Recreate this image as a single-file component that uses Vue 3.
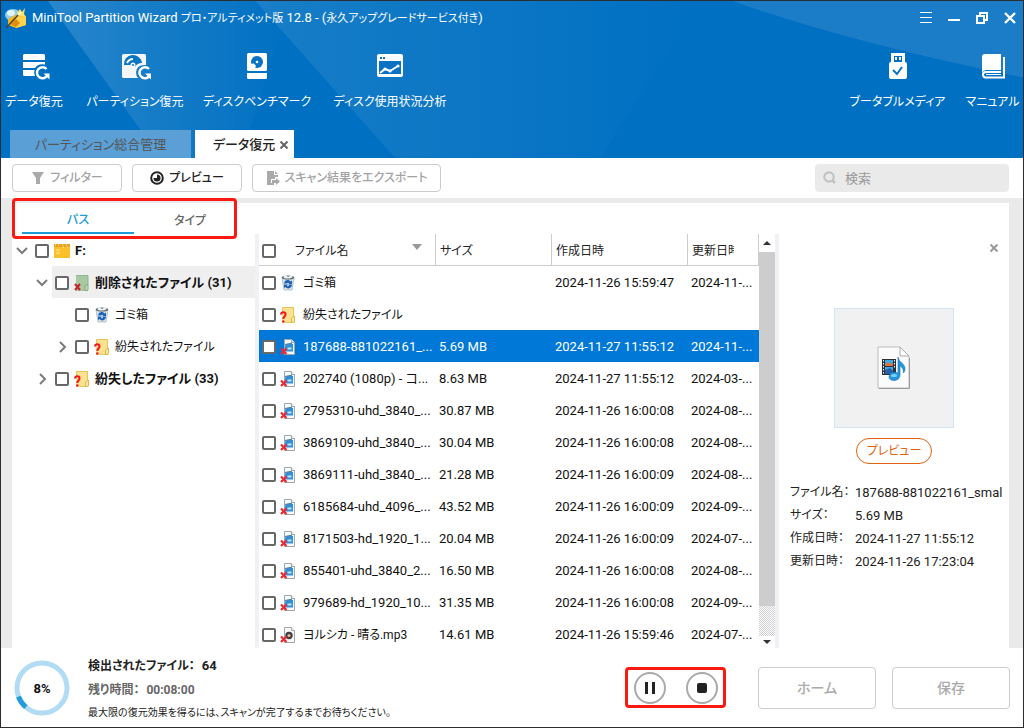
<script setup>
import { ref } from 'vue'

const tools = [
  { id: 'data', label: 'データ復元', cls: 'w58' },
  { id: 'part', label: 'パーティション復元', cls: 'w94' },
  { id: 'bench', label: 'ディスクベンチマーク', cls: 'w100' },
  { id: 'usage', label: 'ディスク使用状況分析', cls: 'w116' },
]

const tree = [
  { id: 1, level: 0, open: true, icon: 'drive', name: 'F:', bold: true },
  { id: 2, level: 1, open: true, icon: 'deleted', name: '削除されたファイル', count: '(31)', bold: true, active: true },
  { id: 3, level: 2, icon: 'bin', name: 'ゴミ箱' },
  { id: 4, level: 2, open: false, icon: 'lost', name: '紛失されたファイル' },
  { id: 5, level: 1, open: false, icon: 'lost', name: '紛失したファイル', count: '(33)', bold: true },
]

const rows = [
  { icon: 'bin', name: 'ゴミ箱', jp: true, size: '', created: '2024-11-26 15:59:47', updated: '2024-11-...' },
  { icon: 'lost', name: '紛失されたファイル', jp: true, size: '', created: '', updated: '' },
  { icon: 'video', name: '187688-881022161_...', size: '5.69 MB', created: '2024-11-27 11:55:12', updated: '2024-11-...' },
  { icon: 'video', name: '202740 (1080p) - コ...', size: '8.63 MB', created: '2024-11-27 11:55:12', updated: '2024-03-...' },
  { icon: 'video', name: '2795310-uhd_3840_...', size: '30.87 MB', created: '2024-11-26 16:00:08', updated: '2024-08-...' },
  { icon: 'video', name: '3869109-uhd_3840_...', size: '30.04 MB', created: '2024-11-26 16:00:08', updated: '2024-08-...' },
  { icon: 'video', name: '3869111-uhd_3840_...', size: '21.28 MB', created: '2024-11-26 16:00:09', updated: '2024-08-...' },
  { icon: 'video', name: '6185684-uhd_4096_...', size: '43.52 MB', created: '2024-11-26 16:00:09', updated: '2024-09-...' },
  { icon: 'video', name: '8171503-hd_1920_1...', size: '20.04 MB', created: '2024-11-26 16:00:09', updated: '2024-07-...' },
  { icon: 'video', name: '855401-uhd_3840_2...', size: '16.50 MB', created: '2024-11-26 16:00:08', updated: '2024-08-...' },
  { icon: 'video', name: '979689-hd_1920_10...', size: '31.35 MB', created: '2024-11-26 16:00:08', updated: '2024-09-...' },
  { icon: 'audio', name: 'ヨルシカ - 晴る.mp3', jp: true, size: '14.61 MB', created: '2024-11-26 15:59:46', updated: '2024-07-...' },
]
const selected = ref(2)

const details = [
  { label: 'ファイル名：', value: '187688-881022161_smal' },
  { label: 'サイズ：', value: '5.69 MB' },
  { label: '作成日時：', value: '2024-11-27 11:55:12' },
  { label: '更新日時：', value: '2024-11-26 17:23:04' },
]
</script>

<template>
  <svg class="defs" aria-hidden="true">
    <defs>
      <symbol id="i-drive" viewBox="0 0 16 16">
        <path d="M0 1h7l1 2h8v12H0z" fill="#fbc02a" />
        <path d="M0 1h16v3H0z" fill="#e9a21c" />
        <path d="M1 2h1M4 2h1M8 2h1M12 2h1M9 4h1M13 4h1" stroke="#fff3c4" />
        <path d="M2 7h4M2 10h4" stroke="#ffe9a6" />
      </symbol>
      <symbol id="i-deleted" viewBox="0 0 16 16">
        <path d="M2 0h12v16H2z" fill="#a9c9a4" />
        <path d="M2 .5h12v9" fill="none" stroke="#8fb58c" />
        <path d="M11 11l3-2v6l-3 1z" fill="#c4dcae" stroke="#84a97f" />
        <path d="M1 9l5 6M6 9l-5 6" stroke="#c5232d" stroke-width="2" />
      </symbol>
      <symbol id="i-lost" viewBox="0 0 16 16">
        <path d="M2 0h12v16H2z" fill="#fbe292" />
        <path d="M2.500 8V.5h11v15h-8" fill="none" stroke="#e6c45c" />
        <path d="M11.500 11l3-2v6l-3 .5z" fill="#ffe9a0" stroke="#dcb94c" />
        <path d="M1 7.500C1 4.500 5.500 4.800 5.500 7.500 5.500 9.500 3.300 9.500 3.300 12" fill="none" stroke="#f5151c" stroke-width="2" />
        <circle cx="3.300" cy="14.500" r="1.300" fill="#f5151c" />
      </symbol>
      <symbol id="i-bin" viewBox="0 0 16 16">
        <path d="M2 3h12l-2 12H4z" fill="#dde3e8" stroke="#a3acb3" stroke-width=".7" />
        <ellipse cx="8" cy="2.500" rx="6.300" ry="2" fill="#59626a" />
        <path d="M3 2l3-2 2 2 3-2 2 2-3 1.500H5z" fill="#eef1f3" />
        <path d="M4 8.500c.5-4 5-4.500 6.500-2l1.500-1v4H8l1.300-1.300c-1-1-2-.5-2.300.3zM12 10c-.5 3.500-5 4.500-6.500 2L4 13V9.500h4l-1.200 1.300c1 1 2 .5 2.300-.8z" fill="#1a62b8" />
      </symbol>
      <symbol id="i-video" viewBox="0 0 16 16">
        <path d="M4.500.5h7l3 3v12h-10z" fill="#f6f8fa" stroke="#a2a6aa" />
        <path d="M11.500.5v3h3" fill="#fff" stroke="#a2a6aa" />
        <path d="M5 7c2-2 5-2.500 8-2v7.500H5z" fill="#2f8fd8" />
        <path d="M5 5l7-1.500V5L5 6.500z" fill="#4e87b1" />
        <path d="M7.500 8.500h4v2h-4z" fill="#bfe6fa" />
        <path d="M1 9.500l5.500 5.500M6.500 9.500L1 15" stroke="#ee2a30" stroke-width="2.200" />
      </symbol>
      <symbol id="i-audio" viewBox="0 0 16 16">
        <path d="M4.500.5h7l3 3v12h-10z" fill="#f6f8fa" stroke="#a2a6aa" />
        <path d="M11.500.5v3h3" fill="#fff" stroke="#a2a6aa" />
        <circle cx="9" cy="8.500" r="3.700" fill="#3c3f43" />
        <circle cx="9" cy="8.500" r="1.600" fill="#f3b48a" />
        <path d="M1 9.500l5.500 5.500M6.500 9.500L1 15" stroke="#ee2a30" stroke-width="2.200" />
      </symbol>
    </defs>
  </svg>

  <div class="window">
    <header class="head">
      <svg class="beams" viewBox="0 0 1024 158" preserveAspectRatio="none" aria-hidden="true">
        <defs>
          <linearGradient id="g1"><stop offset="0" stop-color="#fff" stop-opacity=".16" /><stop offset=".4" stop-color="#fff" stop-opacity=".09" /><stop offset="1" stop-color="#fff" stop-opacity="0" /></linearGradient>
          <linearGradient id="g2"><stop offset="0" stop-color="#fff" stop-opacity=".09" /><stop offset="1" stop-color="#fff" stop-opacity="0" /></linearGradient>
        </defs>
        <path d="M47 0H290L240 158H160z" fill="url(#g1)" />
        <path d="M255 0H700L600 158H395z" fill="url(#g2)" />
        <path d="M733 0Q850 42 1024 77V0z" fill="#1b7dc8" />
      </svg>

      <div class="titlebar">
        <svg class="logo" viewBox="0 0 22 22" aria-hidden="true">
          <ellipse cx="8" cy="8" rx="8" ry="6" fill="#8fcdf0" />
          <ellipse cx="6" cy="6" rx="4" ry="3" fill="#e2f4fd" />
          <path d="M3 12l7-4 11 1v9l-10 3-8-3z" fill="#f7b51d" />
          <path d="M10 9l11 1v8l-10 3z" fill="#ffd24a" />
          <path d="M12 6l3-4 2 3 3-4-1 6 2 3-6-1z" fill="#ffe264" />
          <path d="M6 17l5-5 4 4-4 4z" fill="#e08b12" />
          <path d="M1 21L14 7" stroke="#4d4332" stroke-width="1.500" />
          <path d="M13 8l3-3" stroke="#fffbd0" stroke-width="2" />
        </svg>
        <h1>MiniTool Partition Wizard <span>プロ・アルティメット版</span> 12.8 - (<span>永久アップグレードサービス付き</span>)</h1>
        <div class="winctl">
          <button type="button" aria-label="メニュー"><svg viewBox="0 0 12 12"><path d="M0 .5h12M0 5.500h12M0 10.500h12" stroke="#fff" /></svg></button>
          <button type="button" aria-label="最小化"><svg viewBox="0 0 12 12"><path d="M0 8h12" stroke="#fff" stroke-width="2" /></svg></button>
          <button type="button" aria-label="元に戻す"><svg viewBox="0 0 12 12"><path d="M1 4h7v7H1zM4 4V1h7v7H8" fill="none" stroke="#fff" stroke-width="2" /></svg></button>
          <button type="button" aria-label="閉じる"><svg viewBox="0 0 12 12"><path d="M1 1l10 10M11 1L1 11" stroke="#fff" stroke-width="2.400" /></svg></button>
        </div>
      </div>

      <nav class="tools">
        <button v-for="t in tools" :key="t.id" type="button" :class="['tool', t.cls]">
          <svg v-if="t.id === 'data'" viewBox="0 0 32 28">
            <path d="M5 2.500Q5 1 6.500 1h19Q27 1 27 2.500V7H5zM5 9h22v2.500Q20 10 17 15H5zM5 17h11.500q-1 3 .5 6H6.500Q5 23 5 21.500z" fill="#fff" />
            <path d="M28.500 16a5.500 5.500 0 1 0 1 6" fill="none" stroke="#fff" stroke-width="2.500" />
            <path d="M25.500 20.500h6v6z" fill="#fff" />
          </svg>
          <svg v-else-if="t.id === 'part'" viewBox="0 0 32 28">
            <path d="M3 2.500Q3 1 4.500 1h21Q27 1 27 2.500V12q-9-1-10 7 0 4 2 6H4.500Q3 25 3 23.500z" fill="#f4f6f8" />
            <path d="M5 12a9 9 0 0 1 18-2q-5 0-7 4l-5-2z" fill="#0a75c4" />
            <path d="M8 10q2-4 6-4" fill="none" stroke="#fff" stroke-width="2" />
            <circle cx="14" cy="12" r="2.500" fill="#fff" /><circle cx="14" cy="12" r="1" fill="#0a75c4" />
            <path d="M30 16a5.500 5.500 0 1 0 1 6" fill="none" stroke="#fff" stroke-width="2.500" />
            <path d="M26 20.500h6v6z" fill="#fff" />
          </svg>
          <svg v-else-if="t.id === 'bench'" viewBox="0 0 32 28">
            <rect x="6" y="0" width="20" height="18" rx="1.500" fill="#fff" />
            <path d="M6 20h20v4.500q0 1.500-1.500 1.500h-17Q6 26 6 24.500z" fill="#fff" />
            <circle cx="16" cy="9" r="6" fill="#0a72c2" />
            <circle cx="16" cy="9" r="1.300" fill="#fff" />
            <path d="M9 11l4-.5 2 2.500-2 4H9z" fill="#fff" />
          </svg>
          <svg v-else viewBox="0 0 32 28">
            <path d="M5 1h22q2 0 2 2v19q0 2-2 2H5q-2 0-2-2V3q0-2 2-2z" fill="#fff" />
            <path d="M5 8h22v13H5zM6 4h2v2H6zM9 4h2v2H9z" fill="#0a72c2" />
            <path d="M6 20l5-4 5 2 8-5" fill="none" stroke="#fff" stroke-width="2" />
            <circle cx="11" cy="16" r="1.600" fill="#fff" /><circle cx="16" cy="18" r="1.600" fill="#fff" /><circle cx="24" cy="13" r="1.600" fill="#fff" />
          </svg>
          <span>{{ t.label }}</span>
        </button>
        <span class="grow"></span>
        <button type="button" class="tool w89">
          <svg viewBox="0 0 32 28">
            <path d="M9 0h14v10h-3V3h-8v7H9z" fill="#fff" />
            <path d="M13 4h2v3h-2zM17 4h2v3h-2z" fill="#fff" />
            <rect x="7" y="9" width="18" height="17" rx="2" fill="#fff" />
            <path d="M11 17l4 4 5-7" fill="none" stroke="#0a72c2" stroke-width="2" />
          </svg>
          <span>ブータブルメディア</span>
        </button>
        <button type="button" class="tool w51">
          <svg viewBox="0 0 32 28">
            <path d="M8 1h16v16H9q-4 1-4 4V4q0-3 3-3z" fill="#fff" />
            <path d="M27 4v20.500H8.500Q6 24.500 6 21.500 6 19 9 19h15" fill="none" stroke="#fff" stroke-width="2" />
            <path d="M9 21.500h15" stroke="#fff" stroke-width="1" />
          </svg>
          <span>マニュアル</span>
        </button>
      </nav>

      <nav class="tabs">
        <button type="button" class="tab off">パーティション総合管理</button>
        <div class="tab on">
          <button type="button">データ復元</button>
          <button type="button" aria-label="タブを閉じる" class="x"><svg viewBox="0 0 8 8"><path d="M0.500 0.500l7 7M7.500 0.500l-7 7" stroke="#666" stroke-width="2" /></svg></button>
        </div>
      </nav>
    </header>

    <div class="bar">
      <button type="button" class="btn dim w110">
        <svg viewBox="0 0 14 14"><path d="M1 1h12L9 7v6H5V7z" fill="#aaa" /></svg>フィルター
      </button>
      <button type="button" class="btn w110">
        <svg viewBox="0 0 14 14"><circle cx="7" cy="7" r="5.800" fill="none" stroke="#222" stroke-width="2" /><path d="M7 3.500a3.500 3.500 0 1 1-3.500 3.500H7z" fill="#222" /></svg>プレビュー
      </button>
      <button type="button" class="btn dim w189">
        <svg viewBox="0 0 14 14"><path d="M1 0h7v4h4v2H9v2H5v4h3v2H1zM9 0l3 3H9z" fill="#aaa" /><path d="M6 9h4V7l4 3.500-4 3.500v-2H6z" fill="#aaa" /></svg>スキャン結果をエクスポート
      </button>
      <span class="grow"></span>
      <label class="search">
        <svg viewBox="0 0 14 14"><circle cx="6" cy="6" r="4.700" fill="none" stroke="#c3c3c3" stroke-width="2.200" /><path d="M9 9l3 3" stroke="#c3c3c3" stroke-width="2.600" /></svg>
        <input type="text" placeholder="検索" aria-label="検索" />
      </label>
    </div>

    <main class="body">
      <div class="panel">
        <div class="modes">
          <button type="button" class="mode cur">パス</button>
          <button type="button" class="mode">タイプ</button>
          <span class="mark"></span>
        </div>
        <div class="cols">
          <ul class="tree">
            <li v-for="n in tree" :key="n.id" :class="['l' + n.level, { bold: n.bold, active: n.active }]">
              <button v-if="n.open !== undefined" type="button" class="chev" :aria-label="n.name + 'を展開'">
                <svg viewBox="0 0 12 12"><path :d="n.open ? 'M1 3l5 5 5-5' : 'M4 1l5 5-5 5'" fill="none" stroke="#7c7c7c" stroke-width="2" /></svg>
              </button>
              <span v-else class="chev"></span>
              <div class="node">
                <input :id="'n' + n.id" type="checkbox" />
                <svg class="ico"><use :href="'#i-' + n.icon" /></svg>
                <label :for="'n' + n.id">{{ n.name }} {{ n.count }}</label>
              </div>
            </li>
          </ul>

          <div class="split"></div>

          <div class="list">
            <table>
              <colgroup><col /><col class="c-size" /><col class="c-date" /><col class="c-upd" /></colgroup>
              <thead>
                <tr>
                  <th><div class="cell"><input type="checkbox" aria-label="すべて選択" /><span class="hname">ファイル名</span><svg class="sort" viewBox="0 0 10 6"><path d="M0 0h10L5 6z" fill="#999" /></svg></div></th>
                  <th>サイズ</th>
                  <th>作成日時</th>
                  <th><div class="clip">更新日時</div></th>
                </tr>
              </thead>
              <tbody>
                <tr v-for="(r, i) in rows" :key="i" :class="{ sel: i === selected }" @click="selected = i">
                  <td><div class="cell"><input :id="'r' + i" type="checkbox" /><svg class="ico"><use :href="'#i-' + r.icon" /></svg><label :for="'r' + i" :class="{ jp: r.jp }">{{ r.name }}</label></div></td>
                  <td>{{ r.size }}</td>
                  <td>{{ r.created }}</td>
                  <td>{{ r.updated }}</td>
                </tr>
              </tbody>
            </table>
          </div>

          <div class="scroll">
            <button type="button" aria-label="上へ"><svg viewBox="0 0 8 4"><path d="M4 0l4 4H0z" fill="#333" /></svg></button>
            <div class="thumb"></div>
            <div class="track"></div>
            <button type="button" aria-label="下へ"><svg viewBox="0 0 8 4"><path d="M0 0h8L4 4z" fill="#333" /></svg></button>
          </div>

          <div class="split"></div>

          <aside class="info">
            <button type="button" class="close" aria-label="閉じる"><svg viewBox="0 0 8 8"><path d="M0.500 0.500l7 7M7.500 0.500l-7 7" stroke="#999" stroke-width="2" /></svg></button>
            <div class="thumbnail">
              <svg viewBox="0 0 34 44" aria-hidden="true">
                <path d="M1 1h22l9 9v32H1z" fill="#fbfbfb" stroke="#bcbcbc" />
                <path d="M2 42.500h30.500V12" fill="none" stroke="#9a9a9a" />
                <path d="M23 1v9h9z" fill="#fff" stroke="#aaa" />
                <path d="M5 13h14v16H5z" fill="#2c2f33" />
                <path d="M8 14h8v6H8zM8 21h8v7H8z" fill="#3fa9e0" />
                <path d="M8 19l3-3 3 2 2-1v3H8z" fill="#e0743f" /><path d="M8 24l5-2 3 3v3H8z" fill="#265fae" />
                <path d="M6.500 14v15M17.500 14v8" stroke="#fff" stroke-dasharray="1.500 1.500" />
                <path d="M21 11c1 6 7 6 7 12q0 2-1.500 4c0-5-2-6-3.500-7v9c0 7-11 7-11 2 0-4 5-6 9-4z" fill="#2496dd" stroke="#1776b5" stroke-width=".6" />
                <ellipse cx="17" cy="29.500" rx="3" ry="1.500" fill="#7fd0f7" />
              </svg>
            </div>
            <button type="button" class="pill">プレビュー</button>
            <dl>
              <template v-for="d in details" :key="d.label"><dt>{{ d.label }}</dt><dd>{{ d.value }}</dd></template>
            </dl>
          </aside>
        </div>
      </div>
    </main>

    <footer class="foot">
      <div class="ring">
        <svg viewBox="0 0 56 56" aria-hidden="true">
          <circle cx="28" cy="28" r="25" fill="none" stroke="#b1dcf3" stroke-width="5" />
          <path d="M11.900 47.100A25 25 0 0 1 4.500 36.600" fill="none" stroke="#219dde" stroke-width="5" />
        </svg>
        <b>8%</b>
      </div>
      <div class="status">
        <p>検出されたファイル： <span>64</span></p>
        <p class="left">残り時間： <span>00:08:00</span></p>
        <p class="hint">最大限の復元効果を得るには、スキャンが完了するまでお待ちください。</p>
      </div>
      <span class="grow"></span>
      <div class="play">
        <button type="button" aria-label="一時停止"><svg viewBox="0 0 12 12"><path d="M2.500 0v12M9.500 0v12" stroke="#222" stroke-width="3" /></svg></button>
        <button type="button" aria-label="停止"><svg viewBox="0 0 12 12"><rect x="1" y="1" width="10" height="10" rx="2" fill="#222" /></svg></button>
      </div>
      <button type="button" class="big home">ホーム</button>
      <button type="button" class="big">保存</button>
    </footer>
  </div>
</template>

<style>
html, body, #app { height: 100%; }
body { margin: 0; }
</style>

<style scoped>
* { box-sizing: border-box; }
.defs { position: absolute; width: 0; height: 0; }
.window {
  height: 100%;
  display: flex;
  flex-direction: column;
  border: 1px solid #2b2d30;
  background: #fff;
  color: #111;
  font: 13px/20px Roboto, "Noto Sans CJK JP", sans-serif;
  font-feature-settings: "palt";
  white-space: nowrap;
  overflow: hidden;
}
button { font: inherit; color: inherit; background: none; border: 0; padding: 0; margin: 0; }
svg { display: block; flex: none; }
.grow { flex: 1; }
.jp { font-size: 12px; }

.head { position: relative; background: #0070c2; color: #fff; flex: none; }
.beams { position: absolute; inset: 0; width: 100%; height: 100%; }
.titlebar, .tools, .tabs { position: relative; display: flex; }
.titlebar { height: 34px; align-items: center; padding: 0 7px 0 4px; }
.logo { width: 22px; height: 22px; }
h1 { margin: 0 auto 0 5px; font-size: 13px; font-weight: 400; }
h1 span { font-size: 11px; }
.winctl { display: flex; gap: 16px; }
.winctl svg { width: 12px; height: 12px; }
.tools { gap: 25px; padding: 18px 5px 0 4px; height: 95px; }
.tool { display: flex; flex-direction: column; align-items: center; justify-content: flex-start; gap: 11px; font-size: 12px; }
.tool svg { width: 32px; height: 28px; }
.w58 { width: 58px; }
.w94 { width: 94px; }
.w100 { width: 100px; }
.w116 { width: 116px; }
.w89 { width: 89px; }
.w51 { width: 51px; }
.tabs { gap: 4px; padding-left: 9px; height: 28px; }
.tab { display: flex; align-items: center; justify-content: center; padding-top: 2px; }
.tab.off { width: 181px; background: #5a9fd6; color: #555; }
.tab.on { width: 99px; background: #fff; color: #222; gap: 5px; padding-left: 12px; font-weight: 500; }
.x svg { width: 8px; height: 8px; }

.bar { display: flex; gap: 10px; height: 40px; padding: 6px 14px 6px 11px; flex: none; }
.btn { display: flex; align-items: center; justify-content: center; gap: 5px; border: 1px solid #ccc; border-radius: 4px; font-size: 12px; font-weight: 500; color: #222; }
.btn svg { width: 14px; height: 14px; }
.dim { color: #a3a3a3; }
.w110 { width: 110px; }
.w189 { width: 189px; }
.search { display: flex; align-items: center; gap: 8px; width: 194px; padding: 0 8px; background: #eaeaea; border-radius: 4px; }
.search svg { width: 14px; height: 14px; }
.search input { flex: 1; min-width: 0; border: 0; padding: 2px 0 0; background: none; font: inherit; outline: 0; }
.search input::placeholder { color: #999; opacity: 1; }

.body { flex: 1; min-height: 0; background: #eaeaea; padding: 5px 14px 0 11px; display: flex; }
.panel { flex: 1; min-width: 0; background: #fff; display: flex; flex-direction: column; }
.modes { position: relative; display: flex; height: 31px; padding-left: 10px; flex: none; }
.mode { width: 112px; font-size: 12px; font-weight: 500; color: #666; padding-top: 5px; }
.mode.cur { color: #1f9bd8; border-bottom: 2px solid #1f9bd8; }
.mark { position: absolute; left: 0; top: -5px; width: 225px; height: 41px; border: 3px solid #fb1a12; border-radius: 4px; pointer-events: none; }
.cols { flex: 1; min-height: 0; display: flex; }

input[type="checkbox"] { appearance: none; flex: none; width: 14px; height: 14px; margin: 0; border: 2px solid #686868; border-radius: 2px; background: #fff; }
.ico { width: 16px; height: 16px; }

.tree { list-style: none; margin: 0; padding: 0; width: 243px; font-size: 12px; }
.tree li { display: flex; height: 32px; }
.l1 { padding-left: 20px; }
.l2 { padding-left: 40px; }
.tree .bold { font-size: 13px; font-weight: 700; }
.chev { width: 20px; display: flex; align-items: center; justify-content: center; padding-top: 2px; }
.chev svg { width: 12px; height: 12px; }
.node { flex: 1; display: flex; align-items: center; padding: 2px 0 0 3px; }
.node .ico { margin: 0 5px; }
.active .node { background: #efefef; }
.split { width: 4px; background: #f0f0f5; }

.list { flex: 1; min-width: 0; overflow: hidden; }
table { width: 100%; border-collapse: separate; border-spacing: 0; table-layout: fixed; }
.c-size { width: 116px; }
.c-date { width: 136px; }
.c-upd { width: 71px; }
th, td { height: 32px; padding: 2px 0 0 3px; text-align: left; font-weight: 400; overflow: hidden; }
th { padding-left: 4px; border-bottom: 1px solid #ccc; border-right: 1px solid #ccc; color: #222; font-size: 12px; }
th:first-child { padding-left: 3px; }
.cell { display: flex; align-items: center; }
.cell .ico { margin: 0 7px 0 4px; }
.hname { margin: 0 auto 0 19px; }
.sort { width: 10px; height: 6px; margin: 0 13px 8px 0; }
.clip { width: 42px; overflow: hidden; }
.sel td { background: #0078d7; color: #fff; }

.scroll { width: 16px; display: flex; flex-direction: column; }
.scroll button { height: 18px; display: flex; align-items: center; justify-content: center; flex: none; }
.scroll button:last-child { height: 12px; }
.scroll svg { width: 8px; height: 4px; }
.thumb { flex: 1; background: #cdcdcd; }
.track { height: 30px; background: repeating-conic-gradient(#cfcfcf 0 25%, #fff 0 50%) 0 0 / 2px 2px; }

.info { width: 230px; display: flex; flex-direction: column; align-items: center; }
.close { align-self: flex-end; margin: 10px 11px 56px 0; }
.close svg { width: 8px; height: 8px; }
.thumbnail { width: 120px; height: 120px; border: 1px solid #d0e5f5; background: #f1f1f1; display: grid; place-items: center; }
.thumbnail svg { width: 34px; height: 44px; }
.pill { width: 76px; height: 26px; margin: 10px 0 17px; border: 1px solid #de6310; border-radius: 13px; color: #de6310; font-size: 12px; }
dl { align-self: stretch; display: grid; grid-template-columns: 65px 1fr; line-height: 23px; margin: 0; padding-left: 11px; color: #222; }
dt { font-size: 12px; }
dd { margin: 0; overflow: hidden; }

.foot { flex: none; height: 79px; display: flex; align-items: center; padding: 0 13px; }
.ring { position: relative; width: 56px; height: 56px; display: grid; place-items: center; }
.ring svg { position: absolute; inset: 0; width: 56px; height: 56px; }
.ring b { position: relative; padding-top: 2px; }
.status { margin-left: 18px; padding-top: 2px; }
.status p { margin: 0; font-size: 12px; line-height: 24px; font-weight: 700; color: #222; }
.status span { margin-left: 4px; font-size: 13px; }
.status .left { color: #666; }
.status .left span { font-size: 12px; }
.status .hint { font-size: 10px; font-weight: 400; line-height: 22px; }
.play { display: flex; align-items: center; justify-content: center; gap: 20px; width: 101px; height: 41px; border: 3px solid #fb1a12; border-radius: 4px; margin-right: 32px; }
.play button { width: 32px; height: 32px; border: 2px solid #aaa; border-radius: 50%; display: grid; place-items: center; }
.play svg { width: 12px; height: 12px; }
.big { width: 118px; height: 42px; border: 1px solid #ccc; border-radius: 4px; color: #aaa; font-size: 14px; font-weight: 500; }
.home { margin-right: 16px; }
</style>
